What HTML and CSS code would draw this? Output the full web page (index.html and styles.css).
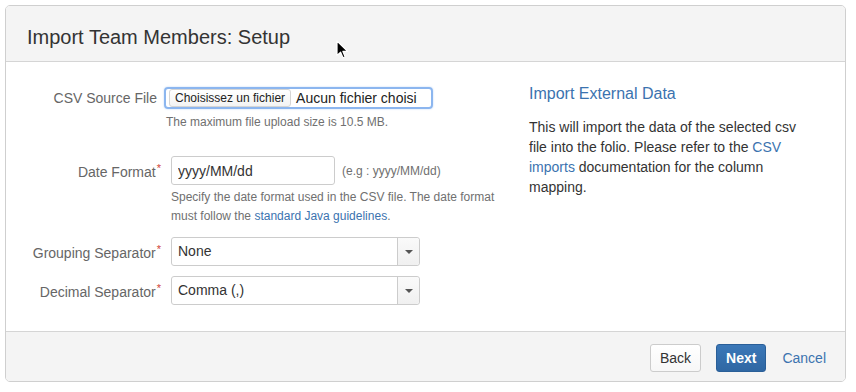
FILE: index.html
```html
<!DOCTYPE html>
<html lang="en">
<head>
    <meta charset="UTF-8">
    <title>Import Team Members: Setup</title>
    <link rel="stylesheet" href="styles.css">
</head>
<body>

    <div class="dialog">
        <div class="dialog-header">
            <h2>Import Team Members: Setup</h2>
        </div>

        <div class="dialog-body">
            <form class="setup-form">
                <div class="field-group">
                    <label class="csv-label">CSV Source File</label>
                    <div class="file-box">
                        <span class="file-btn">Choisissez un fichier</span>
                        <span class="file-name">Aucun fichier choisi</span>
                    </div>
                </div>
                <div class="description file-desc">The maximum file upload size is 10.5 MB.</div>

                <div class="field-group date-group">
                    <label>Date Format<span class="req">*</span></label>
                    <input class="text" type="text" value="yyyy/MM/dd">
                    <span class="example">(e.g : yyyy/MM/dd)</span>
                </div>
                <div class="description date-desc">
                    Specify the date format used in the CSV file. The date format
                    must follow the <a href="#">standard Java guidelines</a>.
                </div>

                <div class="field-group select-group">
                    <label>Grouping Separator<span class="req">*</span></label>
                    <div class="select">
                        <span class="select-value">None</span>
                        <span class="select-arrow"></span>
                    </div>
                </div>

                <div class="field-group select-group">
                    <label>Decimal Separator<span class="req">*</span></label>
                    <div class="select">
                        <span class="select-value">Comma (,)</span>
                        <span class="select-arrow"></span>
                    </div>
                </div>
            </form>

            <div class="aside">
                <h3>Import External Data</h3>
                <p>This will import the data of the selected csv file into the folio. Please refer to the <a href="#">CSV imports</a> documentation for the column mapping.</p>
            </div>
        </div>

        <div class="dialog-footer">
            <button class="btn" type="button">Back</button>
            <button class="btn btn-primary" type="button">Next</button>
            <a class="cancel" href="#">Cancel</a>
        </div>
    </div>

    <!-- курсор мыши -->
    <svg class="cursor" width="13" height="20" viewBox="0 0 13 20">
        <path d="M1 1 L1 15.5 L4.6 12.2 L7 17.8 L9.2 16.9 L6.9 11.4 L11.6 11.4 Z" fill="#000" stroke="#fff" stroke-width="1.2" stroke-linejoin="round"/>
    </svg>

</body>
</html>
```

FILE: styles.css
```css
* {
    box-sizing: border-box;
}

body {
    font-family: "Liberation Sans", Arial, sans-serif;
    font-size: 14px;
    color: #333;
    background: #fff;
    margin: 0;
}

a {
    color: #3b73af;
    text-decoration: none;
}

.dialog {
    width: 841px;
    margin: 5px;
    border: 1px solid #cfcfcf;
    border-radius: 5px;
    overflow: hidden;
}

.dialog-header {
    background: #f4f4f4;
    border-bottom: 1px solid #d5d5d5;
    padding: 19px 20px 12px 21px;
}

.dialog-header h2 {
    margin: 0;
    font-size: 20px;
    font-weight: normal;
    line-height: 24px;
    color: #333;
}

.dialog-body {
    display: flex;
    height: 269px;
    padding: 25px 0 26px;
}

.setup-form {
    flex: 0 0 523px;
}

.field-group {
    display: flex;
    align-items: center;
}

.field-group label {
    width: 155px;
    margin-right: 10px;
    text-align: right;
    color: #666;
    white-space: nowrap;
}

.field-group label.csv-label {
    padding-right: 4px;
}

.req {
    color: #d04437;
    font-size: 11px;
    vertical-align: 5px;
    margin-left: 1px;
}

/* поле выбора файла */
.file-box {
    display: flex;
    align-items: center;
    height: 22px;
    width: 269px;
    margin-left: -7px;
    padding: 0 3px;
    border: 2px solid #8cb6ef;
    border-radius: 4px;
    box-shadow: 0 0 2px #b9d4f7;
}

.file-btn {
    font-size: 12px;
    color: #222;
    line-height: 16px;
    padding: 0 5px;
    border: 1px solid #d5d5d5;
    border-radius: 3px;
    background: linear-gradient(#fff, #f3f3f3);
}

.file-name {
    margin-left: 5px;
    color: #222;
}

.description {
    margin-left: 165px;
    font-size: 12px;
    line-height: 19px;
    color: #707070;
}

.file-desc {
    margin-top: 4px;
    margin-left: 160px;
}

.date-group {
    margin-top: 24px;
}

.date-desc {
    margin-top: 3px;
    width: 340px;
}

input.text {
    width: 164px;
    height: 29px;
    padding: 0 6px;
    border: 1px solid #ccc;
    border-radius: 3px;
    font-family: inherit;
    font-size: 14px;
    color: #333;
}

.example {
    margin-left: 7px;
    font-size: 12px;
    color: #707070;
}

.select-group {
    margin-top: 10px;
}

.date-desc + .select-group {
    margin-top: 11px;
}

.select {
    display: flex;
    width: 249px;
    height: 29px;
    border: 1px solid #ccc;
    border-radius: 3px;
    background: #fff;
}

.select-value {
    flex: 1;
    padding-left: 6px;
    line-height: 27px;
    color: #333;
}

.select-arrow {
    width: 22px;
    border-left: 1px solid #ccc;
    border-radius: 0 3px 3px 0;
    background: linear-gradient(#fafafa, #f0f0f0);
    display: flex;
    align-items: center;
    justify-content: center;
}

.select-arrow::after {
    content: "";
    border-left: 4px solid transparent;
    border-right: 4px solid transparent;
    border-top: 4px solid #555;
}

.aside {
    width: 282px;
}

.aside h3 {
    margin: -3px 0 0;
    font-size: 16px;
    font-weight: normal;
    line-height: 20px;
    color: #3b73af;
}

.aside p {
    margin: 13px 0 0;
    line-height: 20px;
    color: #333;
}

.dialog-footer {
    display: flex;
    justify-content: flex-end;
    align-items: center;
    background: #f4f4f4;
    border-top: 1px solid #d5d5d5;
    padding: 12px 19px 9px;
}

.btn {
    height: 28px;
    padding: 0 9px;
    font-family: inherit;
    font-size: 14px;
    color: #333;
    background: linear-gradient(#fff, #f7f7f7);
    border: 1px solid #ccc;
    border-radius: 3px;
    cursor: pointer;
}

.btn-primary {
    margin-left: 15px;
    color: #fff;
    font-weight: bold;
    background: linear-gradient(#3b78b8, #2f67a3);
    border-color: #2a5f98;
}

.cancel {
    margin-left: 16px;
    font-size: 14px;
}

.cursor {
    position: absolute;
    left: 336px;
    top: 40px;
}
```
